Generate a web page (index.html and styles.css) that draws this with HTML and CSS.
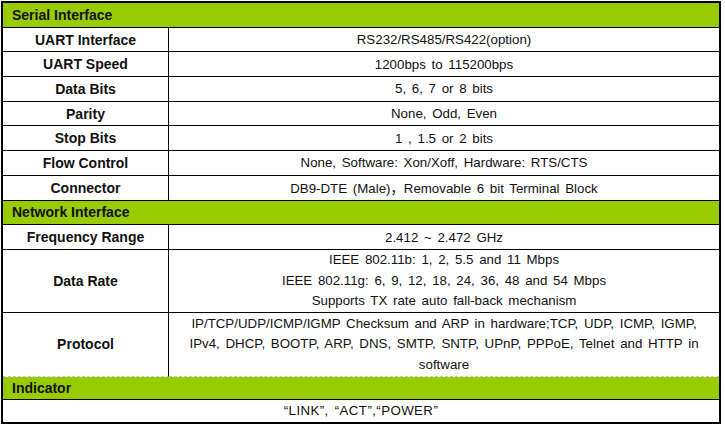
FILE: index.html
```html
<!DOCTYPE html>
<html>
<head>
<meta charset="utf-8">
<link rel="stylesheet" href="styles.css">
</head>
<body>
<div class="frame">
  <div class="spec">
    <div class="head">Serial Interface</div>
    <div class="lab">UART Interface</div><div class="val">RS232/RS485/RS422(option)</div>
    <div class="lab">UART Speed</div><div class="val">1200bps to 115200bps</div>
    <div class="lab">Data Bits</div><div class="val">5, 6, 7 or 8 bits</div>
    <div class="lab">Parity</div><div class="val">None, Odd, Even</div>
    <div class="lab">Stop Bits</div><div class="val">1 , 1.5 or 2 bits</div>
    <div class="lab">Flow Control</div><div class="val">None, Software: Xon/Xoff, Hardware: RTS/CTS</div>
    <div class="lab">Connector</div><div class="val">DB9-DTE (Male)，Removable 6 bit Terminal Block</div>
    <div class="head">Network Interface</div>
    <div class="lab">Frequency Range</div><div class="val">2.412 ~ 2.472 GHz</div>
    <div class="lab">Data Rate</div><div class="val multi">IEEE 802.11b: 1, 2, 5.5 and 11 Mbps<br>IEEE 802.11g: 6, 9, 12, 18, 24, 36, 48 and 54 Mbps<br>Supports TX rate auto fall-back mechanism</div>
    <div class="lab dash">Protocol</div><div class="val multi dash">IP/TCP/UDP/ICMP/IGMP Checksum and ARP in hardware;TCP, UDP, ICMP, IGMP,<br>IPv4, DHCP, BOOTP, ARP, DNS, SMTP, SNTP, UPnP, PPPoE, Telnet and HTTP in<br>software</div>
    <div class="head">Indicator</div>
    <div class="full">“LINK”, “ACT”,“POWER”</div>
  </div>
</div>
</body>
</html>
```

FILE: styles.css
```css
html, body {
  margin: 0;
  padding: 0;
  background: #fff;
}
body {
  padding: 1px 0 0 1px;
  font-family: "Liberation Sans", Arial, "Noto Sans CJK SC", sans-serif;
  color: #111;
}
.frame {
  width: 716px;
  border: 2px solid #000;
}
.spec {
  display: grid;
  grid-template-columns: 166px 1fr;
  grid-template-rows: repeat(10, 24.7px) 63px 64px 23px 22px;
}
.spec > div {
  box-sizing: border-box;
  border-bottom: 1px solid #000;
  display: flex;
  align-items: center;
  justify-content: center;
  text-align: center;
}
.head {
  grid-column: 1 / 3;
  background: #99cc00;
  justify-content: flex-start !important;
  padding-left: 9px;
  font-weight: bold;
  font-size: 14px;
}
.lab {
  border-right: 1px solid #000;
  font-weight: bold;
  font-size: 14px;
}
.val {
  font-size: 13.3px;
  word-spacing: 2px;
}
.multi {
  line-height: 20.5px;
}
.dash {
  border-bottom: 1px dashed #c8c8c8 !important;
}
.full {
  grid-column: 1 / 3;
  font-size: 13.3px;
  word-spacing: 2px;
  letter-spacing: 0.4px;
  border-bottom: none !important;
}
```
